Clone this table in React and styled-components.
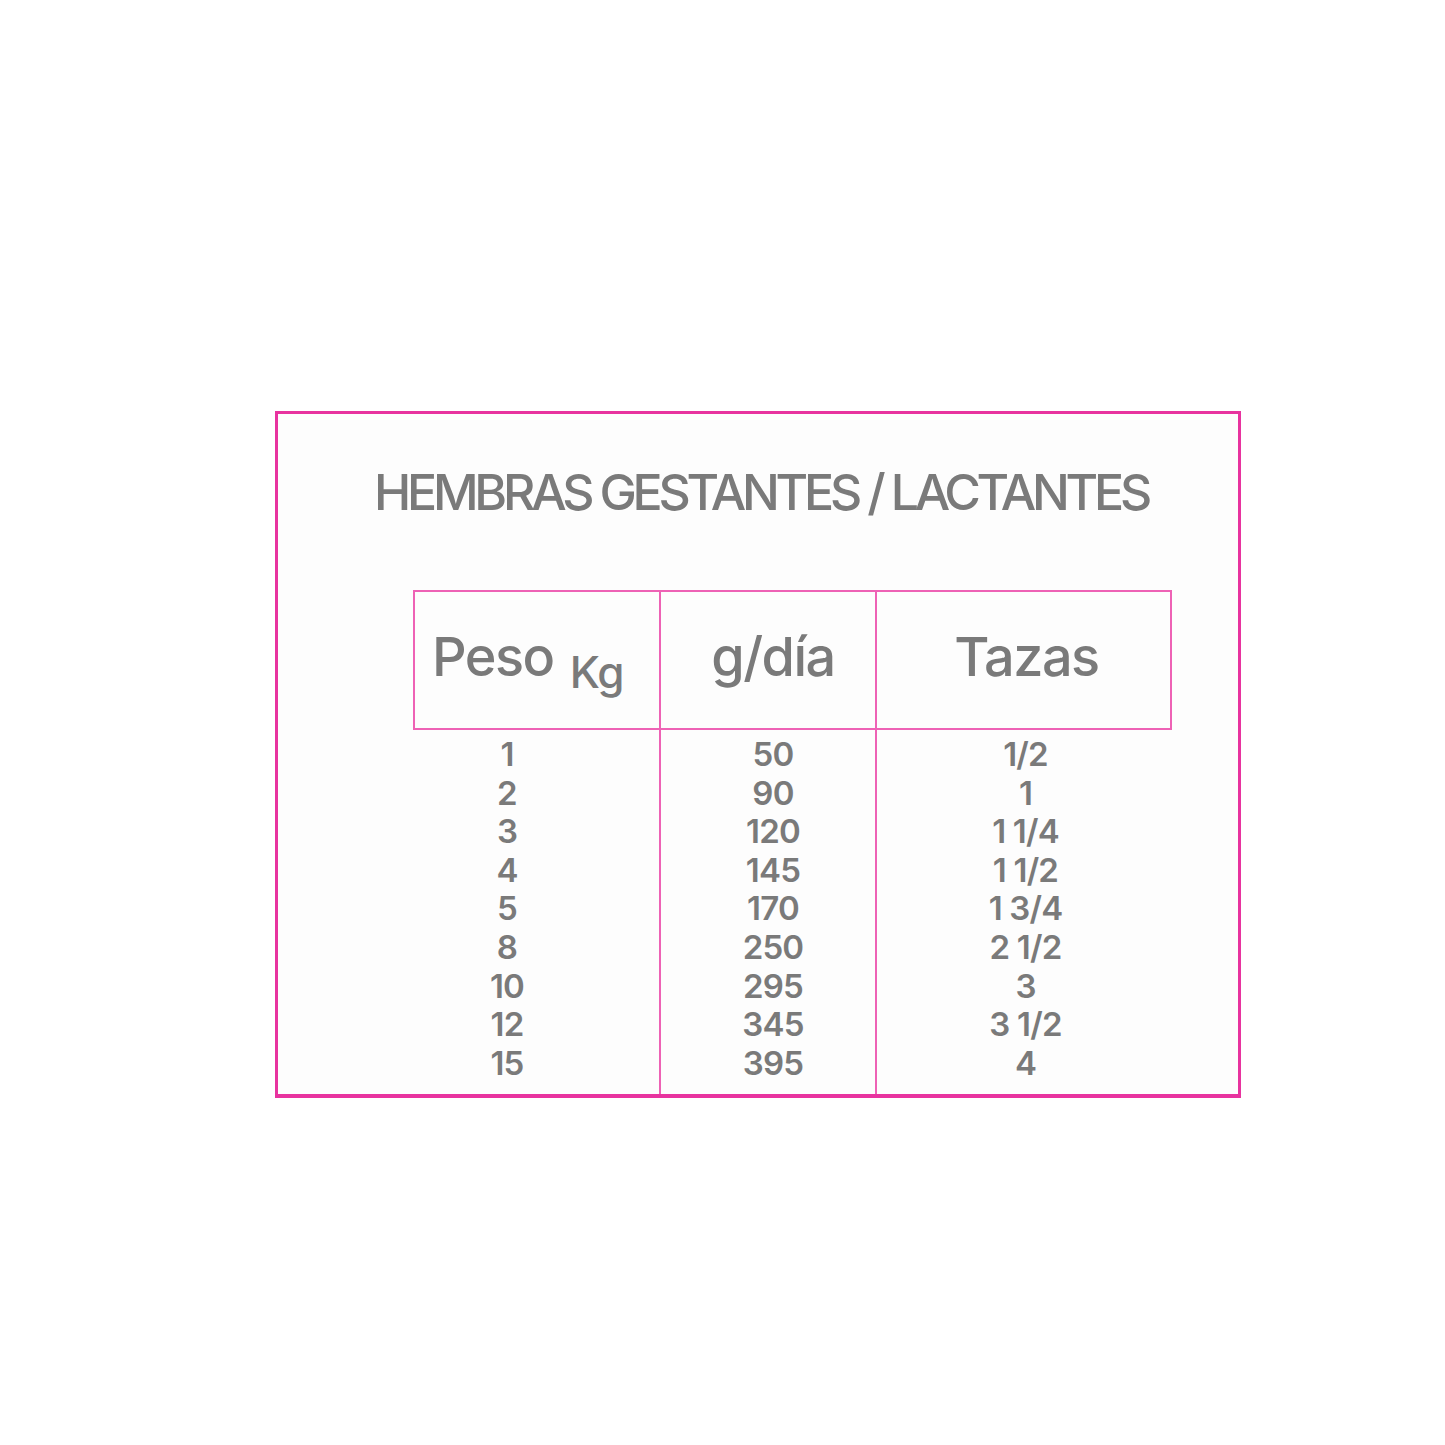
import React from 'react';
import styled, { createGlobalStyle } from 'styled-components';

const GlobalStyle = createGlobalStyle`
  html, body {
    margin: 0;
    padding: 0;
    background: #ffffff;
  }
  body {
    font-family: Inter, "Open Sans", sans-serif;
  }
`;

const Page = styled.div`
  width: 1445px;
  height: 1445px;
  box-sizing: border-box;
  padding: 411px 0 0 275px;
`;

const Card = styled.section`
  box-sizing: border-box;
  width: 966px;
  height: 687px;
  border: 3px solid #e8339f;
  border-bottom-width: 4px;
  background: #fdfdfd;
  display: flex;
  flex-direction: column;
`;

const Title = styled.h1`
  margin: 53px 0 0;
  font-family: Inter, sans-serif;
  font-weight: 500;
  font-size: 50px;
  line-height: 50px;
  letter-spacing: -4.2px;
  color: #7a7a7a;
  text-align: center;
  padding-left: 6px;
`;

const Table = styled.div`
  flex: 1;
  margin: 73px 0 0 135px;
  display: grid;
  grid-template-columns: 248px 216px 295px;
  grid-template-rows: 140px 1fr;
`;

const Line = '2px solid #ee62b5';

const HeadCell = styled.div`
  box-sizing: border-box;
  border-top: ${Line};
  border-bottom: ${Line};
  border-right: ${Line};
  border-left: ${(p) => (p.$first ? Line : 'none')};
  display: flex;
  align-items: center;
  justify-content: ${(p) => (p.$first ? 'flex-start' : 'center')};
  padding-left: ${(p) => p.$pl || 0}px;
  padding-bottom: 8px;
  font-family: Inter, sans-serif;
  font-weight: 500;
  font-size: 54px;
  letter-spacing: -1.5px;
  color: #7a7a7a;
`;

const Unit = styled.span`
  font-size: 44px;
  margin-left: 16px;
  position: relative;
  top: 16px;
  letter-spacing: -1px;
`;

const BodyCell = styled.div`
  box-sizing: border-box;
  border-right: ${(p) => (p.$last ? 'none' : Line)};
  display: flex;
  flex-direction: column;
  align-items: center;
  padding: 5px ${(p) => p.$pr || 0}px 0 ${(p) => p.$pl || 0}px;
`;

const Value = styled.div`
  font-family: Inter, sans-serif;
  font-weight: 600;
  font-size: 33px;
  line-height: 38.6px;
  letter-spacing: -0.8px;
  color: #7a7a7a;
  white-space: pre;
`;

const rows = [
  ['1', '50', '1/2'],
  ['2', '90', '1'],
  ['3', '120', '1 1/4'],
  ['4', '145', '1 1/2'],
  ['5', '170', '1 3/4'],
  ['8', '250', '2 1/2'],
  ['10', '295', '3'],
  ['12', '345', '3 1/2'],
  ['15', '395', '4'],
];

const column = (i) => rows.map((r, k) => <Value key={k}>{r[i]}</Value>);

export default function App() {
  return (
    <>
      <GlobalStyle />
      <Page>
        <Card>
          <Title>HEMBRAS GESTANTES / LACTANTES</Title>
          <Table>
            <HeadCell $first $pl={17}>
              Peso<Unit>Kg</Unit>
            </HeadCell>
            <HeadCell $pl={10}>g/día</HeadCell>
            <HeadCell $pl={6}>Tazas</HeadCell>
            <BodyCell $pr={58}>{column(0)}</BodyCell>
            <BodyCell $pl={10}>{column(1)}</BodyCell>
            <BodyCell $last $pl={2}>{column(2)}</BodyCell>
          </Table>
        </Card>
      </Page>
    </>
  );
}
